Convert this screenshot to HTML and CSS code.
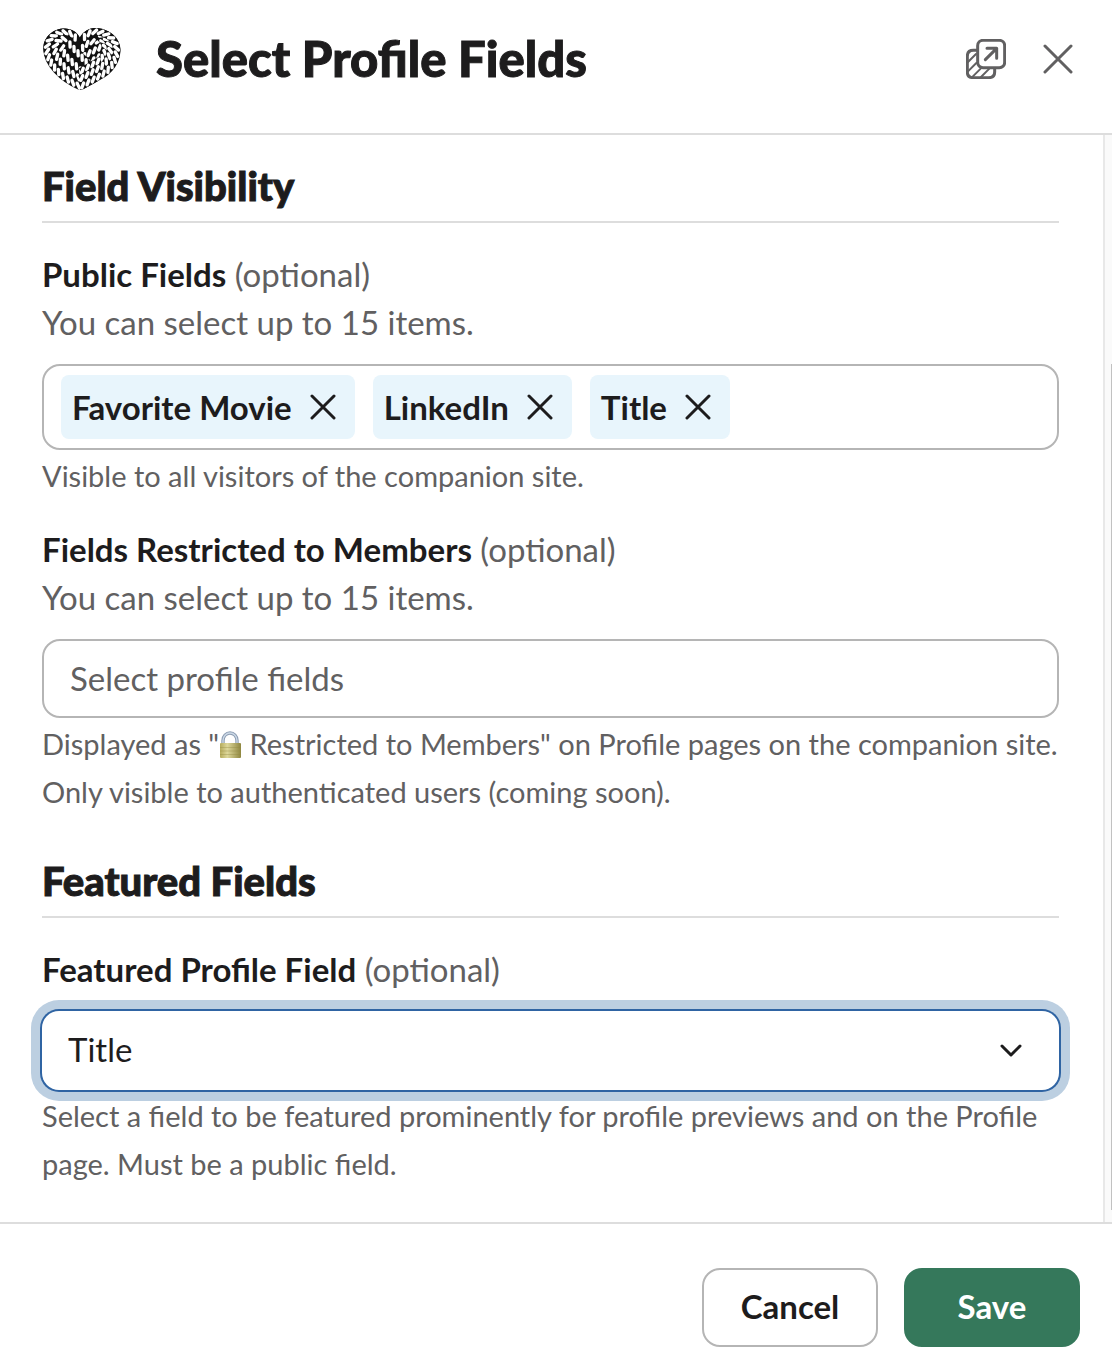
FILE: index.html
```html
<!DOCTYPE html>
<html lang="en">
<head>
  <meta charset="UTF-8" />
  <meta name="viewport" content="width=device-width, initial-scale=1.0" />
  <title>Select Profile Fields</title>
  <link rel="stylesheet" href="styles.css">
</head>
<body>
  <form class="modal">
    <header class="modal-header">
      <!-- Rope heart logo, the twists are added by rope.js -->
      <svg class="logo" viewBox="36 36 240 192" aria-hidden="true">
        <path class="heart-base" d="M153 225C105 206 40 150 40 100C40 60 78 36 112 41Q138 44 150 68Q164 42 190 39C228 38 270 60 271 104C270 160 202 204 153 225Z" />
        <g class="rope" data-twist="1">
          <path d="M154 104Q172 74 212 80" />
          <path d="M156 126L216 94" />
          <path d="M168 148L224 116" />
        </g>
        <g class="rope" data-twist="-1">
          <path d="M150 214C95 190 51 145 51 101C51 68 83 47 114 53Q134 57 144 82" />
          <path d="M150 190C108 166 77 132 74 103Q75 74 101 71Q112 70 122 80" />
          <path d="M96 92Q94 106 108 123L158 172" />
          <path d="M116 84L178 152" />
        </g>
        <g class="rope" data-twist="1">
          <path d="M152 170L214 134Q236 108 220 78L205 62" />
          <path d="M150 192L214 156C246 130 250 90 226 68L206 56" />
          <path d="M153 214L216 179C252 156 265 120 259 94C251 63 215 46 186 51Q164 57 154 82" />
        </g>
      </svg>
      <h1>Select Profile Fields</h1>
      <div class="header-actions">
        <button type="button" class="icon-button" aria-label="Open in new window">
          <svg class="icon-window" viewBox="48 39 120 120" aria-hidden="true">
            <path d="M79 73H70Q52 73 52 91V138Q52 155 70 155H116Q134 155 134 138V130" />
            <path class="hatch" d="M54 108L78 84M54 136L79 111M68 152L92 128M93 153L118 128" />
            <rect x="83" y="43" width="81" height="82" rx="16" />
            <path d="M111 67H140V97M140 67L106 101" />
          </svg>
        </button>
        <button type="button" class="icon-button" aria-label="Close">
          <svg class="icon-close" viewBox="0 0 30 30" aria-hidden="true"><path d="M2 2L28 28M28 2L2 28" /></svg>
        </button>
      </div>
    </header>

    <div class="modal-body">
      <div class="content">
        <section>
          <h2>Field Visibility</h2>
          <div class="field">
            <label for="public-fields"><b>Public Fields</b> (optional)</label>
            <p class="hint">You can select up to 15 items.</p>
            <div class="control multi">
              <span class="chip">Favorite Movie
                <button type="button" aria-label="Remove Favorite Movie"><svg viewBox="0 0 26 26" aria-hidden="true"><path d="M2 2L24 24M24 2L2 24" /></svg></button>
              </span>
              <span class="chip">LinkedIn
                <button type="button" aria-label="Remove LinkedIn"><svg viewBox="0 0 26 26" aria-hidden="true"><path d="M2 2L24 24M24 2L2 24" /></svg></button>
              </span>
              <span class="chip">Title
                <button type="button" aria-label="Remove Title"><svg viewBox="0 0 26 26" aria-hidden="true"><path d="M2 2L24 24M24 2L2 24" /></svg></button>
              </span>
              <input type="text" id="public-fields" />
            </div>
            <p class="help">Visible to all visitors of the companion site.</p>
          </div>
          <div class="field">
            <label for="restricted-fields"><b>Fields Restricted to Members</b> (optional)</label>
            <p class="hint">You can select up to 15 items.</p>
            <input type="text" class="control" id="restricted-fields" placeholder="Select profile fields" />
            <p class="help">Displayed as "<svg class="lock" viewBox="1 0 23 28" role="img" aria-label="locked">
              <defs>
                <linearGradient id="brass" x2="1">
                  <stop offset="0" stop-color="#b5ab5c" />
                  <stop offset="0.35" stop-color="#ddd79a" />
                  <stop offset="1" stop-color="#8f8740" />
                </linearGradient>
              </defs>
              <path d="M5 14V9.500A7 7.500 0 0 1 19 9.500V14" fill="none" stroke="#8d9db3" stroke-width="3.400" />
              <path d="M5 14V9.500A7 7.500 0 0 1 19 9.500V14" fill="none" stroke="#cbd8e6" stroke-width="1.400" />
              <rect x="2" y="12" width="21" height="15" rx="1" fill="url(#brass)" />
              <path d="M2 16.500H23M2 20H23M2 23.500H23" stroke="#8f8740" stroke-opacity="0.350" />
            </svg> Restricted to Members" on Profile pages on the companion site. Only visible to authenticated users (coming soon).</p>
          </div>
        </section>

        <section>
          <h2>Featured Fields</h2>
          <div class="field">
            <label for="featured-field"><b>Featured Profile Field</b> (optional)</label>
            <div class="select">
              <select id="featured-field">
                <option>Title</option>
                <option>LinkedIn</option>
                <option>Favorite Movie</option>
              </select>
              <svg class="chevron" viewBox="0 0 22 14" aria-hidden="true"><path d="M2 2L11 11L20 2" /></svg>
            </div>
            <p class="help">Select a field to be featured prominently for profile previews and on the Profile page. Must be a public field.</p>
          </div>
        </section>
      </div>
      <div class="scroll-track"><div class="scroll-thumb"></div></div>
    </div>

    <footer class="modal-footer">
      <button type="button" class="btn">Cancel</button>
      <button type="submit" class="btn btn-primary">Save</button>
    </footer>
  </form>
  <script src="rope.js"></script>
</body>
</html>
```
FILE: rope.js
```js
// Lay slanted white twists along each rope path of the logo
document.querySelectorAll('.rope').forEach((group) => {
  const twist = Number(group.dataset.twist);
  const offset = 5 * twist;

  function pointAt(path, distance, side) {
    const p = path.getPointAtLength(distance);
    const a = path.getPointAtLength(distance - 1);
    const b = path.getPointAtLength(distance + 1);
    const len = Math.hypot(b.x - a.x, b.y - a.y) || 1;
    const x = p.x - ((b.y - a.y) / len) * side;
    const y = p.y + ((b.x - a.x) / len) * side;
    return `${x.toFixed(1)} ${y.toFixed(1)}`;
  }

  Array.from(group.children).forEach((path) => {
    const total = path.getTotalLength();
    let d = '';
    for (let s = 0; s + 12 <= total; s += 18) {
      d += `M${pointAt(path, s, offset)}L${pointAt(path, s + 12, -offset)}`;
    }
    const strand = document.createElementNS('http://www.w3.org/2000/svg', 'path');
    strand.setAttribute('d', d);
    strand.setAttribute('class', 'twist');
    path.after(strand);
  });
});
```
FILE: styles.css
```css
* { box-sizing: border-box; }
body {
  margin: 0;
  font-family: Lato, sans-serif;
  font-size: 33px;
  line-height: 48px;
  color: #1d1c1d;
  background: #fff;
}
button, input, select { font: inherit; color: inherit; }
button { cursor: pointer; }
h1, h2, p { margin: 0; }
h1, h2 {
  font-weight: 900;
  -webkit-text-stroke: 1px #1d1c1d;
}

.modal {
  display: flex;
  flex-direction: column;
  min-height: 100vh;
}

/* Header */
.modal-header {
  display: flex;
  align-items: center;
  padding: 23px 39px 39px 42px;
  border-bottom: 2px solid #ddd;
}
.logo {
  width: 80px;
  height: 64px;
  margin-right: 34px;
}
.logo .heart-base { fill: #111; }
.rope path {
  fill: none;
  stroke: #111;
  stroke-width: 22;
}
.rope .twist {
  stroke: #fff;
  stroke-width: 10;
  stroke-linecap: round;
}
h1 {
  flex: 1;
  font-size: 49px;
  line-height: 71px;
}
.header-actions {
  display: flex;
  align-items: center;
  gap: 37px;
}
.icon-button {
  display: flex;
  padding: 0;
  border: none;
  background: none;
}
.icon-button svg {
  fill: none;
  stroke: #616061;
  stroke-linecap: round;
  stroke-linejoin: round;
}
.icon-window { width: 40px; height: 40px; stroke-width: 9; }
.icon-window .hatch { stroke-width: 6; }
.icon-close { width: 30px; height: 30px; stroke-width: 3; }

/* Body */
.modal-body {
  flex: 1;
  display: flex;
}
.content {
  flex: 1;
  min-width: 0;
  padding: 21px 44px 34px 42px;
}
section + section { margin-top: 35px; }
h2 {
  padding-bottom: 5px;
  border-bottom: 2px solid #ddd;
  font-size: 40px;
  line-height: 60px;
}
.field { margin-top: 27px; }
.field + .field { margin-top: 25px; }
.field label {
  display: block;
  color: #616061;
}
.field label b { color: #1d1c1d; }
.hint { color: #616061; }
.help {
  margin-top: 2px;
  font-size: 29px;
  color: #616061;
}
.control {
  display: block;
  width: 100%;
  height: 79px;
  margin-top: 18px;
  padding: 0 26px 2px;
  border: 2px solid #b5b5b5;
  border-radius: 18px;
  background: #fff;
}
.control::placeholder { color: #616061; opacity: 1; }

.multi {
  display: flex;
  gap: 18px;
  height: auto;
  padding: 9px 17px;
}
.multi input {
  flex: 1;
  width: 0;
  min-width: 0;
  padding: 0;
  border: none;
  outline: none;
}
.chip {
  display: flex;
  align-items: center;
  gap: 18px;
  height: 64px;
  padding: 0 19px 0 11px;
  border-radius: 8px;
  background: #e8f5fc;
  font-weight: 700;
  white-space: nowrap;
}
.chip button {
  display: flex;
  padding: 0;
  border: none;
  background: none;
}
.chip svg {
  width: 26px;
  height: 26px;
  fill: none;
  stroke: #1d1c1d;
  stroke-width: 3;
  stroke-linecap: round;
}
.lock {
  width: 23px;
  height: 28px;
  vertical-align: -4px;
}

/* Focused drop-down */
.select {
  display: grid;
  align-items: center;
  margin-top: 18px;
}
.select select, .chevron { grid-area: 1 / 1; }
.select select {
  appearance: none;
  width: 100%;
  height: 79px;
  padding: 0 26px 3px;
  border: none;
  border-radius: 17px;
  outline: none;
  background: #fff;
  box-shadow: 0 0 0 2px #2f64a3, 0 0 0 11px #bccfe1;
}
.chevron {
  justify-self: end;
  width: 22px;
  height: 14px;
  margin-right: 37px;
  fill: none;
  stroke: #1d1c1d;
  stroke-width: 3;
  stroke-linecap: round;
  stroke-linejoin: round;
  pointer-events: none;
}

.scroll-track {
  display: flex;
  justify-content: flex-end;
  width: 9px;
  padding: 229px 0 12px;
  border-left: 2px solid #e8e8e8;
  background: #fafafa;
}
.scroll-thumb {
  width: 1px;
  background: #c1c1c1;
}

/* Footer */
.modal-footer {
  display: flex;
  justify-content: flex-end;
  gap: 26px;
  padding: 44px 32px 23px;
  border-top: 2px solid #ddd;
}
.btn {
  width: 176px;
  height: 79px;
  padding: 0 0 3px;
  border: 2px solid #b5b5b5;
  border-radius: 18px;
  background: #fff;
  font-weight: 700;
}
.btn-primary {
  border-color: #35785b;
  background: #35785b;
  color: #fff;
}
```
